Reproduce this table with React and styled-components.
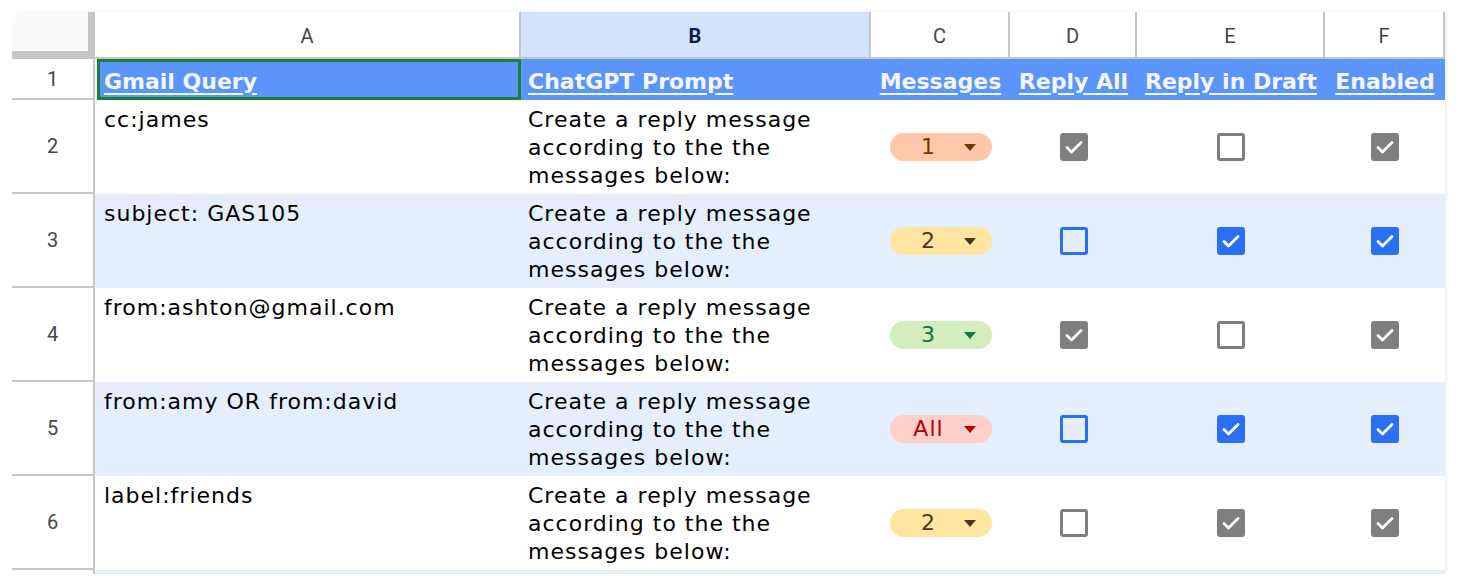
import React from 'react';
import styled, { createGlobalStyle } from 'styled-components';

const Global = createGlobalStyle`
  body {
    margin: 0;
    background: #ffffff;
    font-family: "DejaVu Sans", sans-serif;
  }
`;

const Page = styled.div`
  padding: 12px 0 0 12px;
`;

const Sheet = styled.div`
  display: grid;
  grid-template-columns: 83px 426px 350px 139px 127px 188px 120px;
  grid-template-rows: 47px 41px repeat(5, 94px) 4px;
  width: 1433px;
  box-shadow: 2px 0 3px rgba(60, 64, 67, 0.08);
`;

const Corner = styled.div`
  background: #f8f9fa;
  border-right: 9px solid #c4c7c5;
  border-bottom: 8px solid #c4c7c5;
  border-top-left-radius: 12px;
  margin-right: -2px;
`;

const ColHead = styled.div`
  display: flex;
  align-items: center;
  justify-content: center;
  font-family: Roboto, "Liberation Sans", sans-serif;
  font-size: 20px;
  color: ${p => (p.$active ? '#041e49' : '#444746')};
  font-weight: ${p => (p.$active ? 700 : 400)};
  background: ${p => (p.$active ? '#d3e3fd' : '#ffffff')};
  border-right: 2px solid #c4c7c5;
  border-bottom: 2px solid #c4c7c5;
  padding-top: 2px;
`;

const RowHead = styled.div`
  display: flex;
  align-items: center;
  justify-content: center;
  font-family: Roboto, "Liberation Sans", sans-serif;
  font-size: 20px;
  color: #444746;
  background: #ffffff;
  border-right: 2px solid #c4c7c5;
  border-bottom: ${p => (p.$last ? 'none' : '2px solid #c4c7c5')};
`;

const HeadCell = styled.div`
  display: flex;
  align-items: center;
  justify-content: ${p => (p.$center ? 'center' : 'flex-start')};
  padding: 3px ${p => (p.$center ? '0' : '7px')} 0;
  padding-left: ${p => (p.$selected ? '4px' : undefined)};
  background: #5b95f9;
  color: #f3f6fc;
  font-weight: 700;
  font-size: 22px;
  white-space: nowrap;
  overflow: hidden;
  box-sizing: border-box;
  border: ${p => (p.$selected ? '3px solid #188038' : 'none')};
  margin-left: ${p => (p.$selected ? '2px' : '0')};
  span {
    text-decoration: underline;
    text-decoration-thickness: 2px;
    text-underline-offset: 4px;
  }
`;

const Cell = styled.div`
  display: flex;
  align-items: ${p => (p.$center ? 'center' : 'flex-start')};
  justify-content: ${p => (p.$center ? 'center' : 'flex-start')};
  padding: ${p => (p.$center ? '0' : `6px 6px 0 ${p.$first ? 9 : 7}px`)};
  background: ${p => (p.$band ? '#e5eefd' : '#ffffff')};
  color: #000000;
  font-size: 22px;
  letter-spacing: 1px;
  line-height: 28px;
`;

const Strip = styled.div`
  background: #e5eefd;
`;

const Chip = styled.div`
  display: flex;
  align-items: center;
  width: 102px;
  height: 28px;
  border-radius: 14px;
  background: ${p => p.$bg};
  color: ${p => p.$fg};
  font-size: 22px;
  box-sizing: border-box;
  padding: 0 16px 0 12px;
  span {
    flex: 1;
    text-align: center;
  }
`;

const Arrow = styled.i`
  width: 0;
  height: 0;
  border-left: 6px solid transparent;
  border-right: 6px solid transparent;
  border-top: 7px solid ${p => p.$fg};
  margin-left: 8px;
`;

const Box = styled.div`
  width: 28px;
  height: 28px;
  box-sizing: border-box;
  border-radius: 3px;
  display: flex;
  align-items: center;
  justify-content: center;
  background: ${p => (p.$on ? p.$c : 'transparent')};
  border: ${p => (p.$on ? 'none' : `3px solid ${p.$c}`)};
`;

const chips = {
  '1': { bg: '#ffc8aa', fg: '#753800' },
  '2': { bg: '#ffe5a0', fg: '#473821' },
  '3': { bg: '#d4edbc', fg: '#11734b' },
  All: { bg: '#ffcfc9', fg: '#b10202' },
};

const rows = [
  { q: 'cc:james', m: '1', d: 1, e: 0, f: 1, blue: false },
  { q: 'subject: GAS105', m: '2', d: 0, e: 1, f: 1, blue: true },
  { q: 'from:ashton@gmail.com', m: '3', d: 1, e: 0, f: 1, blue: false },
  { q: 'from:amy OR from:david', m: 'All', d: 0, e: 1, f: 1, blue: true },
  { q: 'label:friends', m: '2', d: 0, e: 1, f: 1, blue: false },
];

const Check = ({ on, blue }) => (
  <Box $on={on} $c={blue ? '#2b6ff6' : '#7f7f7f'}>
    {on && (
      <svg width="28" height="28" viewBox="0 0 28 28">
        <path d="M7 14.5l4.5 4.5L21 9.5" fill="none" stroke="#ffffff" strokeWidth="2.8" strokeLinecap="round" strokeLinejoin="round" />
      </svg>
    )}
  </Box>
);

const Dropdown = ({ value }) => {
  const c = chips[value];
  return (
    <Chip $bg={c.bg} $fg={c.fg}>
      <span>{value}</span>
      <Arrow $fg={c.fg} />
    </Chip>
  );
};

export default function App() {
  return (
    <Page>
      <Global />
      <Sheet>
        <Corner />
        <ColHead>A</ColHead>
        <ColHead $active>B</ColHead>
        <ColHead>C</ColHead>
        <ColHead>D</ColHead>
        <ColHead>E</ColHead>
        <ColHead>F</ColHead>

        <RowHead>1</RowHead>
        <HeadCell $selected><span>Gmail Query</span></HeadCell>
        <HeadCell><span>ChatGPT Prompt</span></HeadCell>
        <HeadCell $center><span>Messages</span></HeadCell>
        <HeadCell $center><span>Reply All</span></HeadCell>
        <HeadCell $center><span>Reply in Draft</span></HeadCell>
        <HeadCell $center><span>Enabled</span></HeadCell>

        {rows.map((r, i) => (
          <React.Fragment key={i}>
            <RowHead>{i + 2}</RowHead>
            <Cell $band={i % 2 === 1} $first>{r.q}</Cell>
            <Cell $band={i % 2 === 1}>Create a reply message according to the the messages below:</Cell>
            <Cell $band={i % 2 === 1} $center><Dropdown value={r.m} /></Cell>
            <Cell $band={i % 2 === 1} $center><Check on={!!r.d} blue={r.blue} /></Cell>
            <Cell $band={i % 2 === 1} $center><Check on={!!r.e} blue={r.blue} /></Cell>
            <Cell $band={i % 2 === 1} $center><Check on={!!r.f} blue={r.blue} /></Cell>
          </React.Fragment>
        ))}
        <RowHead $last />
        <Strip style={{ gridColumn: '2 / 8' }} />
      </Sheet>
    </Page>
  );
}
